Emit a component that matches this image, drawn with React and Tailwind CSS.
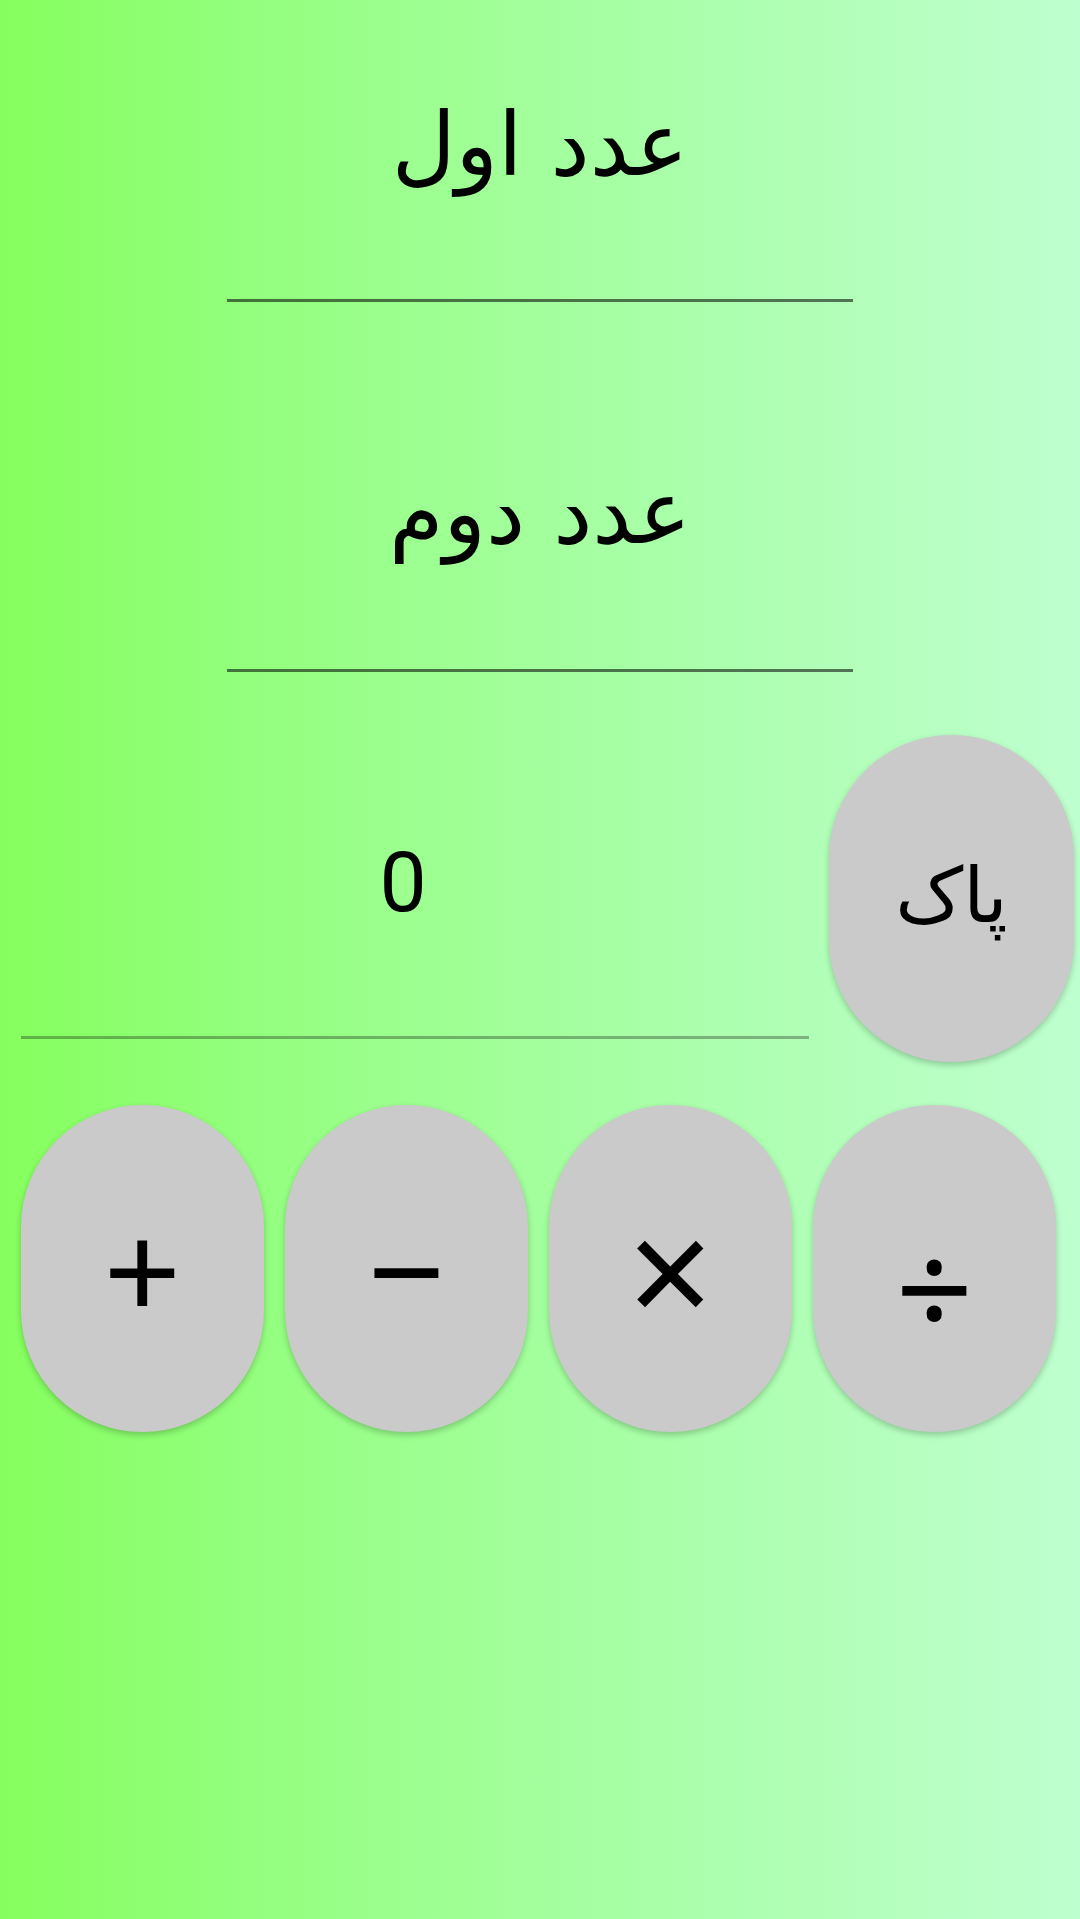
import React from "react";

const arabic = { fontFamily: '"DejaVu Sans", "Noto Naskh Arabic", sans-serif' };

function Field({ hint, top }) {
  return (
    <div
      className={`w-[626px] border-b-[3px] border-black/55 text-center text-[88px] leading-[100px] text-black ${top}`}
      style={arabic}
      dir="rtl"
    >
      {hint}
    </div>
  );
}

function RoundButton({ children, className = "", textClass = "" }) {
  return (
    <button
      className={`flex items-center justify-center rounded-full bg-[#cacaca] text-black shadow-[0_3px_6px_rgba(0,0,0,0.22)] ${className}`}
    >
      <span className={textClass}>{children}</span>
    </button>
  );
}

export default function App() {
  const ops = [
    { s: "+", c: "" },
    { s: "\u2212", c: "" },
    { s: "\u00d7", c: "text-[150px]" },
    { s: "\u00f7", c: "mt-[34px]" },
  ];

  return (
    <div className="min-h-[1919px] w-[1080px] bg-gradient-to-r from-[#85ff5d] to-[#beffcf]">
      {/* inputs */}
      <div className="flex flex-col items-center">
        <Field hint="عدد اول" top="pt-[95px] pb-[104px]" />
        <Field hint="عدد دوم" top="pt-[161px] pb-[106px]" />
      </div>

      {/* result + clear */}
      <div className="flex items-start">
        <div
          className="ml-[21px] w-[788px] border-b-[3px] border-black/30 pt-[161px] pb-[103px] pr-[24px] text-center text-[84px] leading-[100px] text-black"
          style={{ fontFamily: "Roboto, sans-serif" }}
        >
          0
        </div>
        <RoundButton
          className="ml-[20px] mt-[63px] h-[327px] w-[245px]"
          textClass="text-[76px] leading-[100px] mb-[8px]"
        >
          <span style={arabic} dir="rtl">پاک</span>
        </RoundButton>
      </div>

      {/* operators */}
      <div className="mt-[43px] flex gap-[21px] pl-[21px]">
        {ops.map((op) => (
          <RoundButton
            key={op.s}
            className="h-[327px] w-[243px]"
            textClass={`text-[136px] leading-[136px] ${op.c}`}
          >
            <span style={{ fontFamily: '"Noto Sans", sans-serif' }}>{op.s}</span>
          </RoundButton>
        ))}
      </div>
    </div>
  );
}
